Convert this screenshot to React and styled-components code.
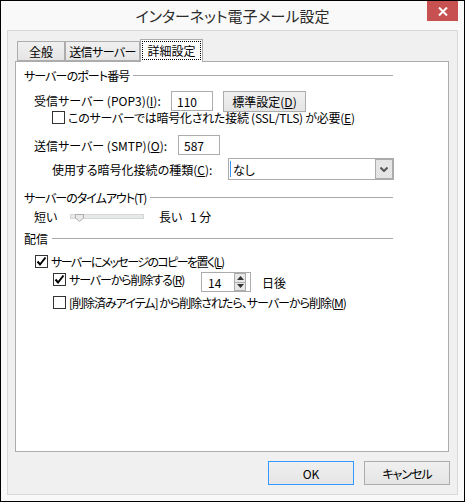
import React from 'react';
import styled, { createGlobalStyle } from 'styled-components';

const Global = createGlobalStyle`
  html, body { margin: 0; padding: 0; background: #fff; }
  body {
    font-family: "Noto Sans CJK JP", "Noto Sans", sans-serif;
    font-size: 12px;
    color: #000;
    font-feature-settings: "palt" 1;
  }
  * { box-sizing: border-box; }
`;

const Window = styled.div`
  width: 465px;
  height: 502px;
  border: 1px solid #000;
  background: #f9f9f9;
  display: flex;
  flex-direction: column;
  padding: 0 6px 6px;
`;

const TitleBar = styled.div`
  height: 29px;
  display: grid;
  grid-template-columns: 1fr auto 1fr;
  align-items: start;
`;

const Title = styled.div`
  grid-column: 2;
  line-height: 29px;
  font-size: 15px;
  color: #2b2b2b;
  white-space: nowrap;
`;

const CloseButton = styled.div`
  grid-column: 3;
  justify-self: end;
  width: 31px;
  height: 20px;
  background: #c75050;
  display: flex;
  align-items: center;
  justify-content: center;
`;

const Client = styled.div`
  flex: 1;
  border: 1px solid #d9d9d9;
  background: #f0f0f0;
  display: flex;
  flex-direction: column;
  padding: 8px 8px 9px 7px;
`;

const TabStrip = styled.div`
  height: 22px;
  display: flex;
  align-items: flex-end;
  padding-left: 2px;
  position: relative;
  z-index: 1;
`;

const Tab = styled.div`
  width: ${p => p.$w}px;
  height: ${p => (p.$active ? 23 : 20)}px;
  margin-bottom: ${p => (p.$active ? -1 : 0)}px;
  border: 1px solid #acacac;
  border-bottom: ${p => (p.$active ? 'none' : '1px solid #acacac')};
  background: ${p => (p.$active ? '#fff' : 'linear-gradient(#f0f0f0, #e5e5e5)')};
  display: flex;
  align-items: center;
  justify-content: ${p => (p.$active ? 'stretch' : 'center')};
  padding: ${p => (p.$active ? '1px 1px 2px' : '0')};
  white-space: nowrap;
`;

const FocusText = styled.span`
  flex: 1;
  align-self: stretch;
  border: 1px dotted #000;
  display: flex;
  align-items: center;
  justify-content: center;
`;

const Panel = styled.div`
  flex: 1;
  border: 1px solid #acacac;
  background: #fff;
  padding: 5px 0 0 8px;
`;

const Heading = styled.div`
  width: 369px;
  height: 16px;
  margin-top: ${p => p.$mt || 0}px;
  display: flex;
  align-items: center;
  gap: 4px;
  white-space: nowrap;
`;

const Rule = styled.div`
  flex: 1;
  height: 1px;
  background: #a9a9a9;
`;

const Row = styled.div`
  display: flex;
  align-items: ${p => p.$align || 'center'};
  height: ${p => p.$h}px;
  margin-top: ${p => p.$mt || 0}px;
  padding-left: ${p => p.$pl || 0}px;
  white-space: nowrap;
`;

const Label = styled.span`
  width: ${p => (p.$w ? `${p.$w}px` : 'auto')};
  flex: none;
  margin-left: ${p => p.$ml || 0}px;
  letter-spacing: ${p => p.$ls || 0}px;
  line-height: ${p => (p.$lh ? `${p.$lh}px` : 'normal')};
`;

const U = styled.span`
  text-decoration: underline;
  text-underline-offset: 1px;
`;

const TextBox = styled.div`
  width: ${p => p.$w}px;
  height: 20px;
  border: 1px solid #acacac;
  background: #fff;
  padding-left: 5px;
  display: flex;
  align-items: center;
`;

const Button = styled.div`
  width: ${p => p.$w}px;
  height: ${p => p.$h}px;
  margin-left: ${p => p.$ml || 0}px;
  border: 1px solid ${p => (p.$default ? '#3399ff' : '#acacac')};
  background: linear-gradient(#f0f0f0, #e5e5e5);
  display: flex;
  align-items: center;
  justify-content: center;
  white-space: nowrap;
`;

const CheckGroup = styled.div`
  display: flex;
  align-items: center;
  gap: 3px;
  width: ${p => (p.$w ? `${p.$w}px` : 'auto')};
  height: ${p => (p.$h ? `${p.$h}px` : 'auto')};
  align-self: ${p => p.$self || 'auto'};
  flex: none;
`;

const Box = styled.div`
  width: 13px;
  height: 13px;
  border: 1px solid #333;
  background: #fff;
  display: flex;
  align-items: center;
  justify-content: center;
  flex: none;
`;

const Select = styled.div`
  width: 166px;
  height: 22px;
  border: 1px solid #acacac;
  background: #fff;
  display: flex;
  align-items: center;
  padding: 0 0 0 1px;
`;

const Caret = styled.div`
  width: 1px;
  height: 16px;
  background: #3399ff;
  margin-right: 2px;
`;

const SelectValue = styled.span`
  flex: 1;
`;

const DropButton = styled.div`
  width: 18px;
  height: 20px;
  border: 1px solid #acacac;
  background: #e5e5e5;
  display: flex;
  align-items: center;
  justify-content: center;
`;

const Track = styled.div`
  position: relative;
  width: 74px;
  height: 5px;
  margin-right: 15px;
  border: 1px solid #d6d6d6;
  background: #e7eaea;
  flex: none;
`;

const Thumb = styled.svg`
  position: absolute;
  left: 4px;
  top: -1px;
`;

const SpinBox = styled.div`
  width: 50px;
  height: 20px;
  border: 1px solid #acacac;
  background: #fff;
  display: flex;
  align-items: stretch;
`;

const SpinValue = styled.span`
  flex: 1;
  padding-left: 6px;
  display: flex;
  align-items: center;
`;

const SpinCol = styled.div`
  width: 12px;
  margin: 0 4px 0 0;
  display: flex;
  flex-direction: column;
`;

const SpinHalf = styled.div`
  flex: 1;
  border: 1px solid #acacac;
  border-top: ${p => (p.$down ? 'none' : '1px solid #acacac')};
  background: #e8e8e8;
  display: flex;
  align-items: center;
  justify-content: center;
`;

const ButtonRow = styled.div`
  display: flex;
  justify-content: flex-end;
  gap: 10px;
  margin: 9px -1px 0 0;
`;

const Check = ({ checked }) => (
  <Box>
    {checked && (
      <svg width="11" height="11" viewBox="0 0 11 11">
        <path d="M1.5 5.5 L4 8.5 L9.5 1.5" fill="none" stroke="#000" strokeWidth="2" />
      </svg>
    )}
  </Box>
);

const Arrow = ({ up }) => (
  <svg width="7" height="4" viewBox="0 0 7 4">
    <path d={up ? 'M0 4 L3.5 0 L7 4 Z' : 'M0 0 L3.5 4 L7 0 Z'} fill="#333" />
  </svg>
);

export default function App() {
  return (
    <>
      <Global />
      <Window>
        <TitleBar>
          <Title>インターネット電子メール設定</Title>
          <CloseButton>
            <svg width="10" height="9" viewBox="0 0 10 9">
              <path d="M1 0.5 L9 8.5 M9 0.5 L1 8.5" stroke="#fff" strokeWidth="2" />
            </svg>
          </CloseButton>
        </TitleBar>
        <Client>
          <TabStrip>
            <Tab $w={48}>全般</Tab>
            <Tab $w={75}>
              <Label $ls={-0.6}>送信サーバー</Label>
            </Tab>
            <Tab $w={63} $active>
              <FocusText>詳細設定</FocusText>
            </Tab>
          </TabStrip>
          <Panel>
            <Heading>
              <Label $ls={-0.9}>サーバーのポート番号</Label>
              <Rule />
            </Heading>
            <Row $h={21} $mt={8} $pl={10} $align="flex-start">
              <Label $w={137} $lh={20}>
                受信サーバー (POP3)(<U>I</U>):
              </Label>
              <TextBox $w={42}>110</TextBox>
              <Button $w={83} $h={21} $ml={10}>
                標準設定(<U>D</U>)
              </Button>
            </Row>
            <Row $h={13} $mt={-1} $pl={28}>
              <CheckGroup>
                <Check />
                <Label $ls={-0.25}>
                  このサーバーでは暗号化された接続 (SSL/TLS) が必要(<U>E</U>)
                </Label>
              </CheckGroup>
            </Row>
            <Row $h={20} $mt={11} $pl={10}>
              <Label $w={144}>
                送信サーバー (SMTP)(<U>O</U>):
              </Label>
              <TextBox $w={42}>587</TextBox>
            </Row>
            <Row $h={22} $mt={3} $pl={28}>
              <Label $w={176}>
                使用する暗号化接続の種類(<U>C</U>):
              </Label>
              <Select>
                <Caret />
                <SelectValue>なし</SelectValue>
                <DropButton>
                  <svg width="8" height="5" viewBox="0 0 8 5">
                    <path d="M0.5 0.5 L4 4 L7.5 0.5" fill="none" stroke="#555" strokeWidth="2" />
                  </svg>
                </DropButton>
              </Select>
            </Row>
            <Heading $mt={9}>
              <Label $ls={-1}>サーバーのタイムアウト(T)</Label>
              <Rule />
            </Heading>
            <Row $h={16} $mt={3} $pl={10}>
              <Label $w={36}>短い</Label>
              <Track>
                <Thumb width="9" height="8" viewBox="0 0 9 8">
                  <polygon points="0.5,0.5 8.5,0.5 8.5,4 4.5,7.5 0.5,4" fill="#e9e9e9" stroke="#acacac" />
                </Thumb>
              </Track>
              <Label $w={31}>長い</Label>
              <Label>1 分</Label>
            </Row>
            <Heading $mt={6}>
              <Label>配信</Label>
              <Rule />
            </Heading>
            <Row $h={16} $mt={7} $pl={11}>
              <CheckGroup>
                <Check checked />
                <Label $ls={-1.6}>
                  サーバーにメッセージのコピーを置く(<U>L</U>)
                </Label>
              </CheckGroup>
            </Row>
            <Row $h={20} $mt={3} $pl={29}>
              <CheckGroup $w={148} $h={15} $self="flex-start">
                <Check checked />
                <Label $ls={-1.1}>
                  サーバーから削除する(<U>R</U>)
                </Label>
              </CheckGroup>
              <SpinBox>
                <SpinValue>14</SpinValue>
                <SpinCol>
                  <SpinHalf>
                    <Arrow up />
                  </SpinHalf>
                  <SpinHalf $down>
                    <Arrow />
                  </SpinHalf>
                </SpinCol>
              </SpinBox>
              <Label $ml={11}>日後</Label>
            </Row>
            <Row $h={16} $mt={2} $pl={29}>
              <CheckGroup>
                <Check />
                <Label $ls={-1}>
                  [削除済みアイテム] から削除されたら、サーバーから削除(<U>M</U>)
                </Label>
              </CheckGroup>
            </Row>
          </Panel>
          <ButtonRow>
            <Button $w={86} $h={24} $default>
              OK
            </Button>
            <Button $w={86} $h={24}>
              <Label $ls={-1}>キャンセル</Label>
            </Button>
          </ButtonRow>
        </Client>
      </Window>
    </>
  );
}
